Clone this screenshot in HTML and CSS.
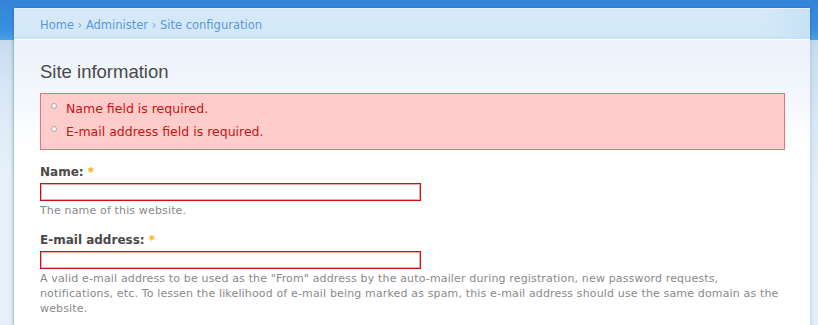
FILE: index.html
```html
<!DOCTYPE html>
<html>
<head>
<meta charset="utf-8">
<link rel="stylesheet" href="styles.css">
</head>
<body>
<div class="page">
  <div class="side side-left"></div>
  <div class="panel">
    <div class="breadcrumb"><a>Home</a> › <a>Administer</a> › <a>Site configuration</a></div>
    <div class="content">
      <h2 class="title">Site information</h2>
      <div class="messages">
        <ul>
          <li>Name field is required.</li>
          <li>E-mail address field is required.</li>
        </ul>
      </div>
      <div class="form-item">
        <label>Name: <span class="req">*</span></label>
        <input class="form-text error" type="text">
        <div class="desc">The name of this website.</div>
      </div>
      <div class="form-item">
        <label>E-mail address: <span class="req">*</span></label>
        <input class="form-text error" type="text">
        <div class="desc">A valid e-mail address to be used as the "From" address by the auto-mailer during registration, new password requests,<br>notifications, etc. To lessen the likelihood of e-mail being marked as spam, this e-mail address should use the same domain as the website.</div>
      </div>
    </div>
  </div>
  <div class="side side-right"></div>
</div>
</body>
</html>
```
FILE: styles.css
```css
html, body {
  margin: 0;
  padding: 0;
}
body {
  width: 818px;
  height: 325px;
  overflow: hidden;
  font-family: "DejaVu Sans", Verdana, sans-serif;
  background: #e9f2fa;
}
.page {
  display: flex;
  height: 325px;
  background:
    linear-gradient(to bottom, #3284d8 0px, #3a8fde 30px, #4a9fe4 40px, transparent 40px),
    #e9f2fa;
}
.side {
  margin-top: 40px;
  height: 285px;
}
.side-left {
  width: 14px;
  background: linear-gradient(to bottom, #c6ddef 0px, #dbe9f5 60px, #e8f1f9 140px);
  box-shadow: inset -3px 0 4px -2px rgba(120,160,200,0.35);
}
.side-right {
  width: 8px;
  background: linear-gradient(to bottom, #c5dcef 0px, #d8e8f4 80px, #e5eff8 160px);
  box-shadow: inset 3px 0 4px -2px rgba(120,160,200,0.35);
}
.panel {
  width: 796px;
  margin-top: 8px;
  display: flex;
  flex-direction: column;
  box-shadow: -1px 0 2px rgba(40,90,150,0.25), 1px 0 2px rgba(40,90,150,0.25);
}
.breadcrumb {
  height: 32px;
  box-sizing: border-box;
  padding: 9px 0 0 26px;
  font-size: 11.5px;
  line-height: 14px;
  color: #7eaadc;
  background:
    linear-gradient(to right, rgba(255,255,255,0) 0px, rgba(255,255,255,0) 750px, rgba(190,222,244,0.6) 796px),
    linear-gradient(to bottom, #d6e9f8 0px, #d3e8f8 26px, #c8e0f6 31px, #c2dcf4 32px);
  border-top: 1px solid #e6f1fb;
  border-bottom: 1px solid #ffffff;
}
.breadcrumb a {
  color: #5a99d8;
}
.content {
  flex: 1;
  padding: 0 25px 0 26px;
  background: linear-gradient(to bottom, #ebf2fa 0px, #f4f8fd 60px, #ffffff 110px);
}
.title {
  margin: 21px 0 0 0;
  height: 32px;
  font-family: "Liberation Sans", Arial, sans-serif;
  font-weight: normal;
  font-size: 18.5px;
  color: #494949;
}
.messages {
  background: #ffcccc;
  border: 1px solid #dd7777;
  color: #cc1111;
  height: 57px;
  box-sizing: border-box;
  padding: 6px 0 0 10px;
  font-size: 12.5px;
}
.messages ul {
  margin: 0;
  padding: 0;
  list-style: none;
}
.messages li {
  position: relative;
  padding-left: 15px;
  height: 23px;
  line-height: 18px;
}
.messages li::before {
  content: "";
  position: absolute;
  left: 0;
  top: 3px;
  width: 4px;
  height: 4px;
  border-radius: 50%;
  border: 1px solid #a9a9a9;
  background: #f8f8f8;
}
.form-item {
  margin-top: 14px;
}
.form-item + .form-item {
  margin-top: 14px;
}
.form-item label {
  display: block;
  font-weight: bold;
  font-size: 12px;
  color: #494949;
  line-height: 16px;
  padding-bottom: 3px;
}
.req {
  color: #ffae00;
}
.form-text {
  display: block;
  width: 381px;
  height: 18px;
  box-sizing: border-box;
  margin: 0;
  padding: 0;
  background: #fff;
}
.form-text.error {
  border: 1px solid #cc1111;
  outline: 1px solid rgba(204,17,17,0.35);
  outline-offset: -2px;
}
.desc {
  margin-top: 2px;
  margin-right: -6px;
  font-size: 11px;
  line-height: 15px;
  letter-spacing: 0.15px;
  color: #898989;
}
```
